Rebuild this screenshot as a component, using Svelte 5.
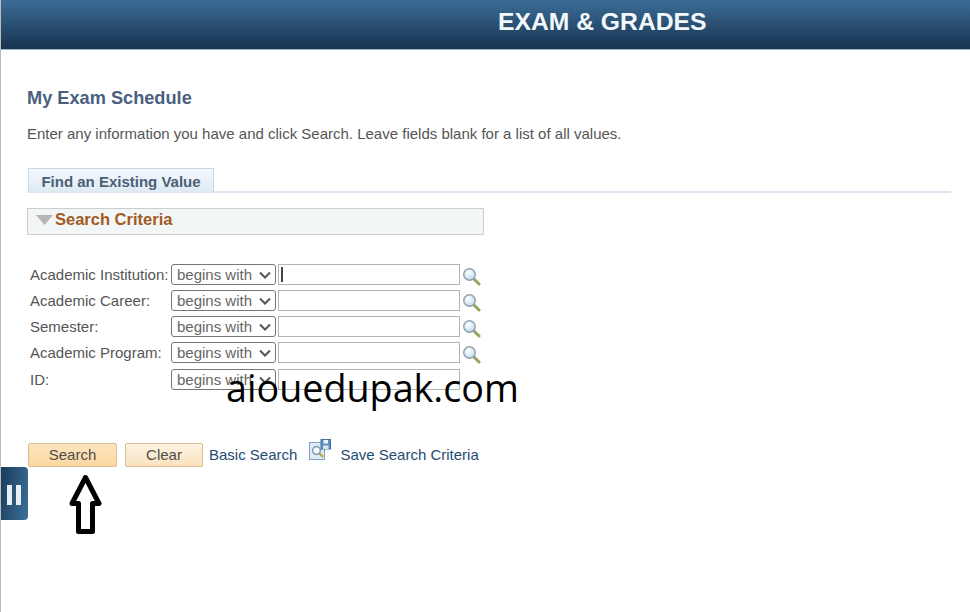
<script lang="ts">
	const fields = [
		{ label: 'Academic Institution:', lookup: true, caret: true },
		{ label: 'Academic Career:', lookup: true },
		{ label: 'Semester:', lookup: true },
		{ label: 'Academic Program:', lookup: true },
		{ label: 'ID:', lookup: false },
	];
</script>

<div class="page">
	<header class="banner"><h1>EXAM &amp; GRADES</h1></header>

	<main class="content">
		<h2>My Exam Schedule</h2>
		<p class="hint">Enter any information you have and click Search. Leave fields blank for a list of all values.</p>

		<div class="tabs"><span class="tab">Find an Existing Value</span></div>

		<div class="criteria">
			<svg class="twisty" width="17" height="10" viewBox="0 0 17 10"><path d="M0 0H17L8.5 10Z" fill="#b5b5b5" /></svg>
			<span>Search Criteria</span>
		</div>

		<div class="fields">
			{#each fields as f}
				<div class="row">
					<label for={f.label}>{f.label}</label>
					<span class="opwrap">
						<select class="op"><option>begins with</option></select>
						<svg class="chev" width="12" height="8" viewBox="0 0 12 8"><path d="M1 1.5L6 6.5L11 1.5" fill="none" stroke="#555" stroke-width="2" /></svg>
					</span>
					<div class="box" id={f.label}>
						{#if f.caret}<i class="caret"></i>{/if}
					</div>
					{#if f.lookup}
						<svg class="lens" width="19" height="19" viewBox="0 0 19 19">
							<defs>
								<radialGradient id="glass" cx="0.4" cy="0.35" r="0.7">
									<stop offset="0" stop-color="#ffffff" />
									<stop offset="1" stop-color="#bcd8ee" />
								</radialGradient>
							</defs>
							<path d="M11.5 11.5L17 17" stroke="#98a35c" stroke-width="3" stroke-linecap="round" />
							<circle cx="7.5" cy="7.5" r="5.8" fill="url(#glass)" stroke="#8fa0ad" stroke-width="1.4" />
						</svg>
					{/if}
				</div>
			{/each}
		</div>

		<div class="actions">
			<button class="btn primary">Search</button>
			<button class="btn">Clear</button>
			<a href="#basic" class="basic">Basic Search</a>
			<svg class="save" width="22" height="21" viewBox="0 0 22 21">
				<rect x="0.5" y="3.5" width="15" height="17" fill="#dfeaf6" stroke="#7fa3cc" />
				<circle cx="7.5" cy="11.5" r="3.8" fill="#f4f9fd" stroke="#6f8aa8" stroke-width="1.3" />
				<path d="M10.5 14.5L14 18" stroke="#b5a94e" stroke-width="2.4" />
				<rect x="12" y="0.5" width="9.5" height="9.5" fill="#5f8fc4" stroke="#44709f" />
				<rect x="14.5" y="1" width="4.5" height="3.5" fill="#eef4fa" />
				<rect x="14" y="6.5" width="5.5" height="3.5" fill="#dbe7f3" />
			</svg>
			<a href="#save" class="savelink">Save Search Criteria</a>
		</div>
	</main>

	<div class="pause"><b></b><b></b></div>

	<svg class="arrow" width="36" height="62" viewBox="0 0 36 62">
		<path d="M17.5 3.5L31 29.5H24.5V57.5H10.5V29.5H4Z" fill="#fff" stroke="#000" stroke-width="5" stroke-linejoin="round" />
	</svg>

	<div class="watermark">aiouedupak.com</div>
</div>

<style>
	:global(body) {
		margin: 0;
		background: #fff;
	}

	.page {
		position: relative;
		width: 970px;
		height: 612px;
		overflow: hidden;
		font-family: 'Liberation Sans', Arial, sans-serif;
		border-left: 1px solid #bdbdbd;
		box-sizing: border-box;
	}

	.banner {
		margin-left: -1px;
		height: 50px;
		box-sizing: border-box;
		background: linear-gradient(#3c6d97, #18334f);
		border-bottom: 1px solid #9dbbd3;
		padding-left: 498px;
	}

	.banner h1 {
		margin: 0;
		font-size: 24.7px;
		line-height: 44px;
		font-weight: 700;
		color: #f3f8fc;
	}

	.content {
		padding: 38px 0 0 26px;
	}

	h2 {
		margin: 0;
		font-size: 18.2px;
		line-height: 20px;
		font-weight: 700;
		color: #49607f;
	}

	.hint {
		margin: 17px 0 0;
		font-size: 15px;
		line-height: 18px;
		color: #555;
	}

	.tabs {
		margin-top: 25px;
		width: 924px;
		height: 25px;
		box-sizing: border-box;
		border-bottom: 2px solid #dbe6f0;
	}

	.tab {
		display: inline-block;
		margin-left: 1px;
		width: 186px;
		height: 24px;
		box-sizing: border-box;
		border: 1px solid #c9d8e6;
		border-bottom: 0;
		background: linear-gradient(#f4f8fc, #dfe9f3);
		font-size: 15px;
		font-weight: 700;
		line-height: 26px;
		text-align: center;
		color: #4a6078;
	}

	.criteria {
		margin-top: 15px;
		width: 457px;
		height: 27px;
		box-sizing: border-box;
		display: flex;
		align-items: center;
		gap: 2px;
		padding: 0 0 4px 8px;
		background: #f2f6f6;
		border: 1px solid #c8cfcf;
		font-size: 16.5px;
		font-weight: 700;
		color: #a35a23;
	}

	.fields {
		margin-top: 29px;
		display: flex;
		flex-direction: column;
		gap: 5px;
	}

	.row {
		display: flex;
		align-items: center;
		height: 21px;
		font-size: 15px;
		color: #555;
	}

	.row:last-child {
		margin-top: 1px;
	}

	.row label {
		width: 141px;
		padding-left: 3px;
		box-sizing: border-box;
		margin-right: 3px;
		white-space: nowrap;
	}

	.opwrap {
		position: relative;
		display: block;
		width: 105px;
		height: 21px;
	}

	.op {
		display: block;
		appearance: none;
		width: 105px;
		height: 21px;
		box-sizing: border-box;
		margin: 0;
		padding: 0 0 0 5px;
		border: 1px solid #767676;
		border-radius: 3px;
		background: #fff;
		font-family: inherit;
		font-size: 15px;
		color: #666;
	}

	.chev {
		position: absolute;
		right: 5px;
		top: 7px;
	}

	.box {
		margin-left: 2px;
		width: 182px;
		height: 21px;
		box-sizing: border-box;
		border: 1px solid #b4b4b4;
		position: relative;
	}

	.caret {
		position: absolute;
		left: 2px;
		top: 2px;
		width: 2px;
		height: 15px;
		background: #444;
	}

	.lens {
		margin: 3px 0 0 2px;
	}

	.actions {
		margin-top: 52px;
		display: flex;
		align-items: center;
		height: 25px;
		font-size: 15px;
	}

	.btn {
		margin: 0 0 0 1px;
		width: 78px;
		height: 24px;
		box-sizing: border-box;
		padding: 0;
		border: 1px solid #d9bd93;
		border-radius: 2px;
		background: linear-gradient(#fdf3e2, #f9e2bf);
		font-family: inherit;
		font-size: 15px;
		color: #4d4d4d;
	}

	.primary {
		width: 89px;
		margin-right: 7px;
		background: linear-gradient(#fde5bd, #fbd7a0);
	}

	a {
		color: #1f4b73;
		text-decoration: none;
	}

	.basic {
		margin-left: 6px;
	}

	.save {
		margin: -11px 0 0 12px;
	}

	.savelink {
		margin-left: 9px;
	}

	.pause {
		position: absolute;
		left: -1px;
		top: 467px;
		width: 28px;
		height: 53px;
		box-sizing: border-box;
		padding: 3px 0 0 7px;
		display: flex;
		align-items: center;
		gap: 4px;
		border-radius: 0 4px 4px 0;
		background: linear-gradient(100deg, #173a58, #3d7099);
	}

	.pause b {
		width: 5px;
		height: 20px;
		background: #e8eef3;
	}

	.arrow {
		position: absolute;
		left: 67px;
		top: 474px;
	}

	.watermark {
		position: absolute;
		left: 225px;
		top: 365px;
		font-family: 'Open Sans', sans-serif;
		font-size: 37.7px;
		line-height: 46px;
		color: #000;
		white-space: nowrap;
	}
</style>
